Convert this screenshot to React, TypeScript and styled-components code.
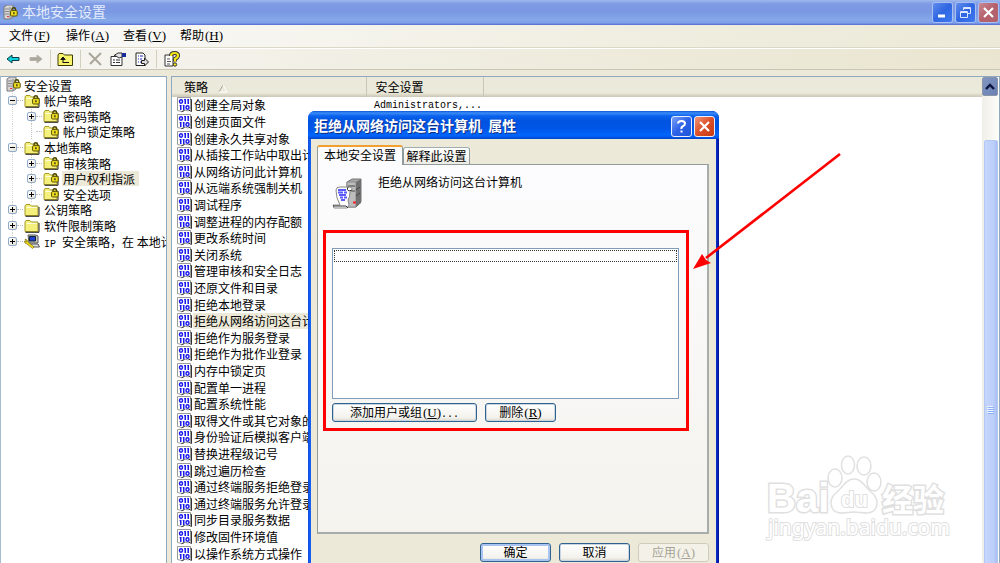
import React from "react";
import styled, { createGlobalStyle } from "styled-components";

const Global = createGlobalStyle`
  * { box-sizing: border-box; }
  html, body, #root { height: 100%; }
  body {
    margin: 0;
    overflow: hidden;
    background: #fff;
    color: #000;
    font: 12px/16px "Noto Sans CJK SC", sans-serif;
  }
  button { font: inherit; color: inherit; padding: 0; }
`;

const Window = styled.div`
  position: relative;
  display: flex;
  flex-direction: column;
  height: 100vh;
  background: #ece9d8;
`;
const TitleBar = styled.header`
  display: flex;
  align-items: center;
  height: 25px;
  flex: none;
  padding: 0 1px 0 3px;
  color: #e4ebfb;
  background: linear-gradient(#9db9ec 0, #7f9ae4 4px, #7a98e2 12px, #85a9ea 20px, #7c9fe8 23px, #5468cf 25px);
`;
const WindowTitle = styled.h1`
  margin: 0 auto 0 3px;
  padding-bottom: 3px;
  font-size: 14px;
  line-height: 20px;
  font-weight: 400;
`;
const Caption = styled.button<{ $tone: "blue" | "rose" | "red" | "bright" }>`
  display: grid;
  place-items: center;
  width: 21px;
  height: 21px;
  margin-left: 2px;
  border-radius: 3px;
  border: 1px solid ${p => (p.$tone === "red" || p.$tone === "bright" ? "#e8eefc" : "#a9c0f3")};
  background: ${p =>
    ({
      blue: "linear-gradient(135deg, #5f8bee, #2f66e2 50%, #3e7af0)",
      rose: "linear-gradient(135deg, #c98a95, #b5606a 50%, #b0646f)",
      red: "linear-gradient(135deg, #ee9578, #dc4f28 50%, #c43c14)",
      bright: "linear-gradient(135deg, #7ba0f6, #2d62e8 50%, #1f56d8)",
    })[p.$tone]};
`;
const MenuBar = styled.nav`
  display: flex;
  flex: none;
  align-items: flex-start;
  height: 23px;
  gap: 14px;
  padding: 2px 0 0 9px;
  background: linear-gradient(90deg, #fafafa, #efedde 70%, #ece9d8);
  border-bottom: 1px solid #dbd8c6;
`;
const MenuItem = styled.button`
  border: 0;
  background: none;
  width: 43px;
  text-align: left;
  white-space: nowrap;
`;
const Latin = styled.span`
  font: 10px/15px "Liberation Mono", monospace;
`;
const Mnemonic = styled.span`
  margin-left: 1px;
  font: 13px/15px "Liberation Serif", serif;
`;
const ToolBar = styled.div`
  display: flex;
  flex: none;
  align-items: center;
  height: 22px;
  padding-left: 1px;
  border-top: 1px solid #fff;
  border-bottom: 1px solid #c9c6b5;
  background: linear-gradient(90deg, #f6f5f1, #eeebdc 60%, #e9e5d0);
`;
const Tool = styled.button`
  display: grid;
  place-items: center;
  width: 23px;
  height: 20px;
  border: 0;
  background: none;
`;
const Divider = styled.i`
  width: 1px;
  height: 18px;
  margin: 0 3px;
  background: #d2cfbd;
`;
const Body = styled.main`
  display: flex;
  flex: 1;
  min-height: 0;
  gap: 4px;
  padding-top: 6px;
`;
const Panel = styled.section`
  display: flex;
  min-width: 0;
  overflow: hidden;
  background: #fff;
  border: 1px solid #8fa9c0;
  border-bottom: 0;
`;
const TreePanel = styled(Panel)`
  flex: 0 0 167px;
  border-left-color: #a9bccb;
`;
const ListPanel = styled(Panel)`
  flex: 1;
`;
const TreeList = styled.ul`
  display: grid;
  grid-template-rows: repeat(11, 1fr);
  height: 172px;
  width: 100%;
  margin: 0;
  padding: 0;
  list-style: none;
`;
const TreeRow = styled.li<{ $depth: number }>`
  display: flex;
  align-items: center;
  padding-left: ${p => [5, 6, 25][p.$depth]}px;
  white-space: nowrap;
  background-image: ${p =>
    p.$depth === 2
      ? "repeating-linear-gradient(#c4c4bd 0 1px, transparent 1px 2px), repeating-linear-gradient(#d6d6d0 0 1px, transparent 1px 2px)"
      : p.$depth === 1
        ? "repeating-linear-gradient(#d6d6d0 0 1px, transparent 1px 2px)"
        : "none"};
  background-size: 1px 100%;
  background-position: ${p => (p.$depth === 2 ? "30px 0, 11px 0" : "11px 0")};
  background-repeat: no-repeat;
`;
const Expander = styled.button<{ $blank?: boolean }>`
  display: grid;
  place-items: center;
  width: 9px;
  height: 9px;
  margin-left: 1px;
  border: 1px solid #8fabc9;
  border-radius: 2px;
  background: linear-gradient(135deg, #fff, #e4e1d6);
  visibility: ${p => (p.$blank ? "hidden" : "visible")};
`;
const Branch = styled.i`
  width: 6px;
  margin-right: 1px;
  border-top: 1px dotted #bdbdb5;
`;
const TreeLabel = styled.span<{ $selected?: boolean }>`
  height: 15px;
  line-height: 15px;
  padding: 0 4px 0 1px;
  margin-left: 1px;
  white-space: pre;
  background: ${p => (p.$selected ? "#ece9d8" : "transparent")};
`;
const ListArea = styled.div`
  flex: 1;
  min-width: 0;
`;
const PolicyTable = styled.table`
  width: 100%;
  border-collapse: collapse;
  table-layout: fixed;
`;
const HeadCell = styled.th`
  height: 20px;
  padding: 0 0 0 12px;
  text-align: left;
  font-weight: 400;
  background: linear-gradient(#ebe9da 0 16px, #e2dfcd 17px, #cbc7b8 20px);
  &:not(:first-child) {
    border-left: 1px solid #c9c6b6;
    padding-left: 9px;
  }
`;
const SortMark = styled.svg`
  margin-left: 10px;
  vertical-align: -1px;
`;
const PolicyRows = styled.ul`
  display: grid;
  grid-template-rows: repeat(28, 1fr);
  height: 465px;
  margin: 0;
  padding: 0;
  list-style: none;
`;
const PolicyRow = styled.li`
  display: grid;
  grid-template-columns: 197px 1fr;
  align-items: center;
  padding-left: 5px;
`;
const PolicyName = styled.span<{ $selected?: boolean }>`
  display: flex;
  align-items: center;
  height: 16px;
  white-space: nowrap;
  overflow: hidden;
  span { background: ${p => (p.$selected ? "#ece9d8" : "transparent")}; padding: 0 2px 0 1px; }
`;
const ScrollTrack = styled.div`
  display: flex;
  flex-direction: column;
  flex: none;
  width: 17px;
  background: linear-gradient(90deg, #f0efe8, #fdfdfa);
`;
const ScrollUp = styled.button`
  display: grid;
  place-items: center;
  flex: none;
  width: 16px;
  height: 19px;
  border: 1px solid #8c94a8;
  border-radius: 2px;
  background: linear-gradient(135deg, #8296c0, #6880b4);
`;
const ScrollThumb = styled.div`
  display: grid;
  place-items: center;
  flex: none;
  width: 14px;
  height: 540px;
  margin: 44px 0 0 2px;
  border: 1px solid #b3c8f5;
  border-radius: 2px;
  background: linear-gradient(90deg, #c6d6fc, #bccffa 70%, #a9bff0);
`;

const Dialog = styled.section`
  position: absolute;
  left: 308px;
  top: 111px;
  width: 411px;
  height: 480px;
  display: flex;
  flex-direction: column;
  padding: 0 3px;
  border-radius: 7px 7px 0 0;
  background: linear-gradient(90deg, #0a4ae0, #1560f0 2px, #0a45d8 50%, #0831d9 408px, #00138c);
  overflow: hidden;
`;
const DialogBar = styled.header`
  display: flex;
  align-items: center;
  flex: none;
  height: 28px;
  margin: 0 -3px;
  padding: 2px 4px 0 6px;
  color: #fff;
  background: linear-gradient(#0a57d6 0, #3c8cf8 2px, #0b62ec 5px, #0053e0 10px, #0056e8 18px, #0066fc 24px, #0050e0 27px, #0040c0 28px);
`;
const DialogTitle = styled.h2`
  margin: 0 auto 0 0;
  padding-bottom: 2px;
  font-size: 14px;
  line-height: 20px;
  font-weight: 700;
  text-shadow: 1px 1px 0 #0f2f86;
  white-space: pre;
`;
const DialogBody = styled.div`
  flex: 1;
  display: flex;
  flex-direction: column;
  padding: 6px 7px 0 6px;
  background: #ece9d8;
`;
const Tabs = styled.div`
  display: flex;
  align-items: flex-end;
  height: 19px;
`;
const Tab = styled.button<{ $active?: boolean }>`
  position: relative;
  height: ${p => (p.$active ? 20 : 17)}px;
  width: ${p => (p.$active ? 86 : 67)}px;
  margin-bottom: ${p => (p.$active ? -1 : 0)}px;
  padding-bottom: ${p => (p.$active ? 3 : 1)}px;
  border: 1px solid #919b9c;
  border-bottom: 0;
  border-top: ${p => (p.$active ? "2px solid #f0a030" : "1px solid #a0acb4")};
  border-radius: 3px 3px 0 0;
  background: ${p => (p.$active ? "#fcfcfe" : "linear-gradient(#fff, #ecebe4)")};
  line-height: 15px;
  white-space: nowrap;
`;
const TabPage = styled.div`
  height: 370px;
  padding: 13px 15px 0 14px;
  border: 1px solid #919b9c;
  border-right: 2px solid #a7adaa;
  border-bottom: 2px solid #a7adaa;
  background: linear-gradient(#fcfcfe, #f4f3ee);
`;
const PolicyHead = styled.div`
  display: flex;
  gap: 14px;
  height: 52px;
  p { margin: 0; line-height: 8px; }
`;
const Highlight = styled.div`
  height: 201px;
  margin: 0 3px 0 -9px;
  padding: 15px 7px 0 6px;
  border: 3px solid #fe0000;
`;
const UserList = styled.div`
  height: 151px;
  padding: 1px;
  border: 1px solid #7f9db9;
  background: #fff;
`;
const FocusRow = styled.div`
  height: 12px;
  border: 1px dotted #333;
`;
const ButtonRow = styled.div<{ $end?: boolean }>`
  display: flex;
  gap: 8px;
  margin-top: ${p => (p.$end ? 9 : 4)}px;
  justify-content: ${p => (p.$end ? "flex-end" : "flex-start")};
`;
const PushButton = styled.button<{ $wide?: boolean; $primary?: boolean }>`
  width: ${p => (p.$wide ? 145 : 71)}px;
  height: 19px;
  padding-bottom: 2px;
  border: 1px solid #2f628f;
  border-radius: 3px;
  background: linear-gradient(#fff, #f3f2ed 80%, #dcd8cb);
  box-shadow: ${p => (p.$primary ? "inset 0 0 0 2px #a9c4f0" : "inset 0 0 0 1px #c9d6e2")};
  line-height: 15px;
  white-space: nowrap;
  &:disabled {
    color: #a5a395;
    border-color: #cfccbe;
    background: #f3f1e8;
    box-shadow: none;
  }
`;
const Arrow = styled.svg`
  position: absolute;
  left: 690px;
  top: 150px;
`;
const Watermark = styled.svg`
  position: absolute;
  left: 764px;
  top: 452px;
`;

function Server() {
  return (
    <g>
      <path d="M1 2 4 0h6v12l-3 2H1z" fill="#d5d5d5" stroke="#777" />
      <path d="M7 2v12M2 4h4M2 6.500h4M2 9h4" stroke="#888" fill="none" />
      <path d="M4 11.500h2" stroke="#e33" />
    </g>
  );
}
function Lock({ x, y }: { x: number; y: number }) {
  return (
    <g transform={`translate(${x} ${y})`}>
      <path d="M2 4V2.500Q2 .8 3.800.8T5.600 2.500V4" fill="none" stroke="#4a4500" strokeWidth="1.400" />
      <rect x=".6" y="3.600" width="6.600" height="5.400" rx="1" fill="#f0e020" stroke="#5a5200" />
      <path d="M3.900 5.300v2" stroke="#222" strokeWidth="1.300" />
    </g>
  );
}
const RootIcon = () => (
  <svg width="16" height="16" viewBox="0 0 16 16">
    <Server /><Lock x={7} y={2} />
  </svg>
);
const FolderIcon = ({ locked }: { locked?: boolean }) => (
  <svg width="18" height="14" viewBox="0 0 18 14">
    <path d="M1 12.500V3l1-1.500h4L7.500 3H14v9.500z" fill="#f5ef7c" stroke="#a59a28" />
    <path d="M1.500 13.300h13.500V4" fill="none" stroke="#222" />
    <path d="M2.500 4.500H13" stroke="#fffde0" />
    {locked && <Lock x={8} y={1} />}
  </svg>
);
const IpIcon = () => (
  <svg width="18" height="15" viewBox="0 0 18 15">
    <path d="M4 1h8l2 1v7H5z" fill="#c8c8c8" stroke="#555" />
    <path d="M5.500 2.500h6v4.500h-6z" fill="#1d3fd0" stroke="#123" />
    <path d="M6 10h8l1.500 3H8z" fill="#ddd" stroke="#555" />
    <path d="M1 5l2 1 1 2 6 5-1.500 1.500L3 10 1 9 .5 7l2 .8z" fill="#f5e020" stroke="#7a6d00" strokeWidth=".7" />
  </svg>
);
const PolicyIcon = () => (
  <svg width="16" height="16" viewBox="0 0 16 16">
    <path d="M.5 .5h13v12l-2.500 1.500-3-1-3 1.500-4.500-1z" fill="#fff" stroke="#9a9a9a" />
    <path d="M13.500 2.500h1v12l-3-1.500M4.500 14.800l3-1.300" stroke="#333" fill="none" />
    <g fill="none" stroke="#1a1aee" strokeWidth="1.500">
      <ellipse cx="4" cy="4.500" rx="1.500" ry="1.700" />
      <path d="M8.250 2v5M11.250 2v5M3.750 8v5M6.750 8v5" />
      <path d="M7 2.700h1.500M10.300 2.700h1M2.500 8.700h1.200M5.700 8.700h1" strokeWidth="1" />
      <ellipse cx="10.500" cy="10.500" rx="1.500" ry="1.700" />
    </g>
  </svg>
);
const PropertyIcon = () => (
  <svg width="32" height="32" viewBox="0 0 32 32">
    <path d="M15 4 20 1h9v23l-5 5h-9z" fill="#a8a8a8" stroke="#777" />
    <path d="M15 4h9v25h-9z" fill="#bdbdbd" stroke="#8a8a8a" />
    <path d="m24 4 5-3v24l-5 4z" fill="#707070" />
    <path d="M16 8h7m-7 5h7m1-1 4-3m-4 9 4-3" stroke="#444" />
    <path d="M21 24.500h3" stroke="#e22" strokeWidth="2" />
    <path d="M4 12q0-3 4-3h10q3 0 2 4l-2 1q0 5-2 8l1 5-2 3H2l-1-3h7q-4-7-4-15z" fill="#fff" stroke="#888" />
    <path d="M16 9q-2 3 1 4l3-1M1 28h13l2 2" fill="none" stroke="#333" />
    <path d="M6 12h8M6 14.500h5m1 0h3M7 17h7M8 19.500h3m1 0h3M9 22h4" stroke="#5a5aff" strokeWidth="1.800" />
  </svg>
);
const Cross = () => (
  <svg width="13" height="13" viewBox="0 0 13 13">
    <path d="m2 2 9 9m0-9-9 9" stroke="#fff" strokeWidth="2.200" />
  </svg>
);
const ArrowIcon = ({ back }: { back?: boolean }) => (
  <svg width="14" height="12" viewBox="0 0 14 12">
    {back ? (
      <path d="M1 6l5-4v2.500h7v3H6V10z" fill="#10d0d8" stroke="#063c48" />
    ) : (
      <path d="M13 6 8 2v2.500H1v3h7V10z" fill="#aaa89c" stroke="#b5b3a7" />
    )}
  </svg>
);
const UpIcon = () => (
  <svg width="17" height="15" viewBox="0 0 17 15">
    <path d="M1 13.500V3l1-1.500h4L7.500 3H15.500v10.500z" fill="#f8f470" stroke="#3f3b00" />
    <path d="M6 10.500h6M6 11V6M3.800 7.500 6 5l2.200 2.500z" stroke="#111" fill="#111" />
  </svg>
);
const DeleteIcon = () => (
  <svg width="15" height="14" viewBox="0 0 15 14">
    <path d="m1 1 12 12M13 1 2 12" stroke="#a9a69a" strokeWidth="2" />
  </svg>
);
const PropsIcon = () => (
  <svg width="17" height="15" viewBox="0 0 17 15">
    <path d="M1 4.500h11v9H1z" fill="#fff" stroke="#333" />
    <path d="M3 8h2m1 0h4M3 10.500h2m1 0h4" stroke="#333" />
    <path d="M4 3.500 8 1h4v4L9 6 6 4z" fill="#e5e5e5" stroke="#333" />
    <path d="M12 1h4v4h-4z" fill="#1a2b9a" />
  </svg>
);
const ExportIcon = () => (
  <svg width="14" height="15" viewBox="0 0 14 15">
    <path d="M1 1h7l2 2v10.500H1z" fill="#fff" stroke="#222" />
    <path d="M3 4h1m1 0h3M3 7h1m1 0h2M3 10h1m1 0h2" stroke="#1a2bbb" />
    <path d="M6.500 8.500h3V6l4 4-4 4v-2.500h-3z" fill="#ddd" stroke="#222" />
  </svg>
);
const HelpIcon = () => (
  <svg width="16" height="16" viewBox="0 0 16 16">
    <path d="M1 4h8v11H1z" fill="#fff" stroke="#333" />
    <path d="M3 8h3M3 10.500h4M3 13h3" stroke="#555" />
    <path d="M7 5q0-3 3.500-3T14 4.500q0 2-3 3.500v2.500" fill="none" stroke="#333" strokeWidth="4" />
    <path d="M7 5q0-3 3.500-3T14 4.500q0 2-3 3.500v2.500" fill="none" stroke="#f7e418" strokeWidth="2.200" />
    <circle cx="11" cy="13.500" r="1.700" fill="#f7e418" stroke="#333" />
  </svg>
);

const Key = ({ k }: { k: string }) => (
  <Mnemonic>(<u>{k}</u>)</Mnemonic>
);

type Node = { text: string; depth: number; open?: boolean; leaf?: boolean; icon: "root" | "lock" | "plain" | "ip"; on?: boolean };
const tree: Node[] = [
  { text: "安全设置", depth: 0, icon: "root" },
  { text: "帐户策略", depth: 1, open: true, icon: "lock" },
  { text: "密码策略", depth: 2, icon: "lock" },
  { text: "帐户锁定策略", depth: 2, leaf: true, icon: "lock" },
  { text: "本地策略", depth: 1, open: true, icon: "lock" },
  { text: "审核策略", depth: 2, icon: "lock" },
  { text: "用户权利指派", depth: 2, icon: "lock", on: true },
  { text: "安全选项", depth: 2, icon: "lock" },
  { text: "公钥策略", depth: 1, icon: "plain" },
  { text: "软件限制策略", depth: 1, icon: "plain" },
  { text: "安全策略，在 本地计", depth: 1, icon: "ip" },
];
const policies = [
  "创建全局对象", "创建页面文件", "创建永久共享对象", "从插接工作站中取出计", "从网络访问此计算机",
  "从远端系统强制关机", "调试程序", "调整进程的内存配额", "更改系统时间", "关闭系统", "管理审核和安全日志",
  "还原文件和目录", "拒绝本地登录", "拒绝从网络访问这台计", "拒绝作为服务登录", "拒绝作为批作业登录",
  "内存中锁定页", "配置单一进程", "配置系统性能", "取得文件或其它对象的", "身份验证后模拟客户端",
  "替换进程级记号", "跳过遍历检查", "通过终端服务拒绝登录", "通过终端服务允许登录", "同步目录服务数据",
  "修改固件环境值", "以操作系统方式操作",
];

export default function App() {
  return (
    <Window>
      <Global />
      <TitleBar>
        <RootIcon />
        <WindowTitle>本地安全设置</WindowTitle>
        <Caption $tone="blue" aria-label="最小化">
          <svg width="13" height="13"><path d="M2 10h7" stroke="#fff" strokeWidth="3" /></svg>
        </Caption>
        <Caption $tone="blue" aria-label="还原">
          <svg width="13" height="13" viewBox="0 0 13 13" fill="none" stroke="#dbe6ff">
            <path d="M4.500 4V1.500h7v6H9M4.500 2.500h7" /><path d="M1.500 5.500h7v6h-7zM1.500 6.500h7" />
          </svg>
        </Caption>
        <Caption $tone="rose" aria-label="关闭"><Cross /></Caption>
      </TitleBar>
      <MenuBar>
        <MenuItem>文件<Key k="F" /></MenuItem>
        <MenuItem>操作<Key k="A" /></MenuItem>
        <MenuItem>查看<Key k="V" /></MenuItem>
        <MenuItem>帮助<Key k="H" /></MenuItem>
      </MenuBar>
      <ToolBar>
        <Tool aria-label="后退"><ArrowIcon back /></Tool>
        <Tool aria-label="前进"><ArrowIcon /></Tool>
        <Divider />
        <Tool aria-label="向上"><UpIcon /></Tool>
        <Divider />
        <Tool aria-label="删除"><DeleteIcon /></Tool>
        <Tool aria-label="属性"><PropsIcon /></Tool>
        <Tool aria-label="导出列表"><ExportIcon /></Tool>
        <Divider />
        <Tool aria-label="帮助"><HelpIcon /></Tool>
      </ToolBar>
      <Body>
        <TreePanel>
          <TreeList>
            {tree.map(n => (
              <TreeRow key={n.text} $depth={n.depth}>
                {n.depth > 0 && (
                  <>
                    <Expander $blank={n.leaf} aria-label={n.open ? "折叠" : "展开"}>
                      <svg width="5" height="5" stroke="#000"><path d={n.open ? "M0 2.500h5" : "M0 2.500h5M2.500 0v5"} /></svg>
                    </Expander>
                    <Branch />
                  </>
                )}
                {n.icon === "root" ? <RootIcon /> : n.icon === "ip" ? <IpIcon /> : <FolderIcon locked={n.icon === "lock"} />}
                <TreeLabel $selected={n.on}>{n.icon === "ip" && <Latin>IP </Latin>}{n.text}</TreeLabel>
              </TreeRow>
            ))}
          </TreeList>
        </TreePanel>
        <ListPanel>
          <ListArea>
            <PolicyTable>
              <colgroup><col width="194" /><col width="117" /><col /></colgroup>
              <thead>
                <tr>
                  <HeadCell>
                    策略
                    <SortMark width="11" height="9"><path d="M1 8 5 1" stroke="#aaa797" /><path d="m5 1 4 7H1" fill="none" stroke="#fff" /></SortMark>
                  </HeadCell>
                  <HeadCell>安全设置</HeadCell>
                  <HeadCell />
                </tr>
              </thead>
            </PolicyTable>
            <PolicyRows>
              {policies.map((p, i) => (
                <PolicyRow key={p}>
                  <PolicyName $selected={i === 13}><PolicyIcon /><span>{p}</span></PolicyName>
                  {i === 0 && <Latin>Administrators,...</Latin>}
                </PolicyRow>
              ))}
            </PolicyRows>
          </ListArea>
          <ScrollTrack>
            <ScrollUp aria-label="向上滚动">
              <svg width="10" height="8"><path d="m1 6 4-4 4 4" fill="none" stroke="#0a1440" strokeWidth="2.400" /></svg>
            </ScrollUp>
            <ScrollThumb>
              <svg width="8" height="9">
                <path d="M0 .5h6M0 2.500h6M0 4.500h6M0 6.500h6" stroke="#eef4fe" />
                <path d="M1 1.500h6M1 3.500h6M1 5.500h6M1 7.500h6" stroke="#8cb0f8" />
              </svg>
            </ScrollThumb>
          </ScrollTrack>
        </ListPanel>
      </Body>

      <Dialog role="dialog" aria-labelledby="dlg-title">
        <DialogBar>
          <DialogTitle id="dlg-title">拒绝从网络访问这台计算机  属性</DialogTitle>
          <Caption $tone="bright" aria-label="帮助">
            <svg width="13" height="15" viewBox="0 0 13 15">
              <path d="M3 4.500Q3 2 6.500 2T10 4.500Q10 6 8 7.200T6.500 10" fill="none" stroke="#fff" strokeWidth="2" />
              <path d="M6.500 11.500v2" stroke="#fff" strokeWidth="2" />
            </svg>
          </Caption>
          <Caption $tone="red" aria-label="关闭"><Cross /></Caption>
        </DialogBar>
        <DialogBody>
          <Tabs role="tablist">
            <Tab $active role="tab" aria-selected>本地安全设置</Tab>
            <Tab role="tab">解释此设置</Tab>
          </Tabs>
          <TabPage>
            <PolicyHead>
              <PropertyIcon />
              <p>拒绝从网络访问这台计算机</p>
            </PolicyHead>
            <Highlight>
              <UserList><FocusRow /></UserList>
              <ButtonRow>
                <PushButton $wide>添加用户或组<Key k="U" /><Latin>...</Latin></PushButton>
                <PushButton>删除<Key k="R" /></PushButton>
              </ButtonRow>
            </Highlight>
          </TabPage>
          <ButtonRow $end>
            <PushButton $primary>确定</PushButton>
            <PushButton>取消</PushButton>
            <PushButton disabled>应用<Key k="A" /></PushButton>
          </ButtonRow>
        </DialogBody>
      </Dialog>

      <Arrow width="152" height="122" viewBox="0 0 152 122">
        <path d="M150 4 16 108" stroke="#fe0000" strokeWidth="2.600" />
        <path d="m3 119 9-15 4 6 5 3z" fill="#fe0000" />
      </Arrow>
      <Watermark width="190" height="92" viewBox="0 0 190 92" fill="#fff" stroke="#e0e0e0" strokeWidth="2">
        <g paintOrder="stroke" strokeWidth="3">
          <text x="3" y="60" fontFamily="Liberation Sans, sans-serif" fontWeight="700" fontSize="40">Bai</text>
          <text x="118" y="59" fontFamily="Noto Sans CJK SC, sans-serif" fontWeight="700" fontSize="31">经验</text>
          <text x="4" y="83" fontFamily="Noto Sans, sans-serif" fontSize="21" strokeWidth="2">jingyan.baidu.com</text>
        </g>
        <g strokeWidth="1.500">
          <ellipse cx="71" cy="26" rx="7" ry="9" />
          <ellipse cx="84" cy="13" rx="6.500" ry="9" />
          <ellipse cx="100" cy="14" rx="7" ry="9" />
          <ellipse cx="110" cy="30" rx="7" ry="9" />
          <path d="M90 27c8 0 11 8 17 13 9 7 8 20-4 21-5 0-8-1-13-1s-8 1-13 1c-12-1-13-14-4-21 6-5 9-13 17-13z" />
        </g>
        <text x="77" y="55" fontFamily="Liberation Sans, sans-serif" fontWeight="700" fontSize="22" paintOrder="stroke" strokeWidth="2">du</text>
      </Watermark>
    </Window>
  );
}
